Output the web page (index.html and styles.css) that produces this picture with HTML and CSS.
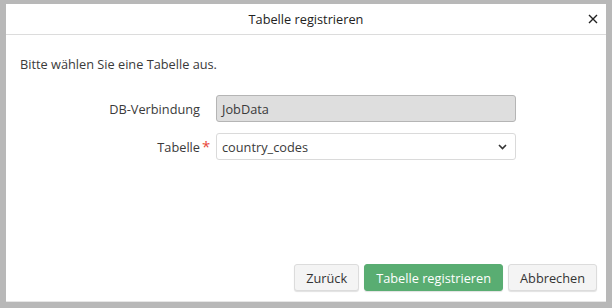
FILE: index.html
```html
<!DOCTYPE html>
<html>
<head>
<meta charset="utf-8">
<link rel="stylesheet" href="styles.css">
</head>
<body>
<div class="backdrop">
  <div class="dialog">
    <div class="header">
      <span class="title">Tabelle registrieren</span>
      <span class="close">
        <svg width="10" height="10" viewBox="0 0 10 10"><path d="M1 1L9 9M9 1L1 9" stroke="#222" stroke-width="1.4" fill="none"/></svg>
      </span>
    </div>
    <div class="body">
      <p class="intro">Bitte wählen Sie eine Tabelle aus.</p>
      <div class="form">
        <div class="row">
          <label class="label"><span class="ltext">DB-Verbindung</span></label>
          <div class="field readonly">JobData</div>
        </div>
        <div class="row">
          <label class="label"><span class="ltext">Tabelle<span class="req">*</span></span></label>
          <div class="field select">country_codes
            <svg class="chev" width="9" height="6" viewBox="0 0 9 6"><path d="M1 1L4.5 4.5L8 1" stroke="#333" stroke-width="1.6" fill="none"/></svg>
          </div>
        </div>
      </div>
    </div>
    <div class="footer">
      <button class="btn">Zurück</button>
      <button class="btn primary">Tabelle registrieren</button>
      <button class="btn">Abbrechen</button>
    </div>
  </div>
</div>
</body>
</html>
```
FILE: styles.css
```css
html, body {
  margin: 0;
  padding: 0;
  width: 612px;
  height: 308px;
  overflow: hidden;
}
body {
  font-family: "Open Sans", "Noto Sans", sans-serif;
  font-size: 12.75px;
  color: #3a3a3a;
  background: #b8b8b8;
}
.backdrop {
  box-sizing: border-box;
  width: 612px;
  height: 308px;
  padding: 4px 6px 6px 6px;
}
.dialog {
  background: #fff;
  height: 298px;
  display: flex;
  flex-direction: column;
  border-bottom: 1px solid #e6e6e6;
  box-sizing: border-box;
}
.header {
  height: 30px;
  border-bottom: 1px solid #dcdcdc;
  display: flex;
  align-items: center;
  justify-content: center;
  position: relative;
}
.title {
  color: #222;
}
.close {
  position: absolute;
  right: 8px;
  top: 10px;
  line-height: 0;
}
.body {
  flex: 1;
  padding: 0 14px;
}
.intro {
  margin: 20px 0 0 0;
  line-height: 18px;
}
.form {
  margin-top: 22px;
  display: flex;
  flex-direction: column;
  gap: 11px;
}
.row {
  display: flex;
  align-items: center;
  height: 27px;
}
.label {
  width: 196px;
  text-align: right;
  padding-right: 16px;
  box-sizing: border-box;
}
.ltext {
  position: relative;
}
.req {
  position: absolute;
  left: 100%;
  top: -2px;
  margin-left: 2px;
  color: #e8473a;
  font-size: 15px;
}
.field {
  box-sizing: border-box;
  width: 300px;
  height: 27px;
  border-radius: 3px;
  padding: 0 5px;
  display: flex;
  align-items: center;
  position: relative;
}
.readonly {
  background: #dedede;
  border: 1px solid #b5b5b5;
}
.select {
  background: #fff;
  border: 1px solid #dadada;
}
.chev {
  position: absolute;
  right: 8px;
  top: 10px;
}
.footer {
  display: flex;
  justify-content: flex-end;
  gap: 5px;
  padding: 0 9px 10px 0;
}
.btn {
  font-family: "Open Sans", "Noto Sans", sans-serif;
  font-size: 12.75px;
  height: 27px;
  padding: 0 11px;
  border: 1px solid #dcdcdc;
  background: #f4f4f4;
  color: #333;
  border-radius: 3px;
  box-shadow: 0 1px 1px rgba(0,0,0,0.12);
}
.primary {
  background: #59ad72;
  border-color: #59ad72;
  color: #fff;
}
```
